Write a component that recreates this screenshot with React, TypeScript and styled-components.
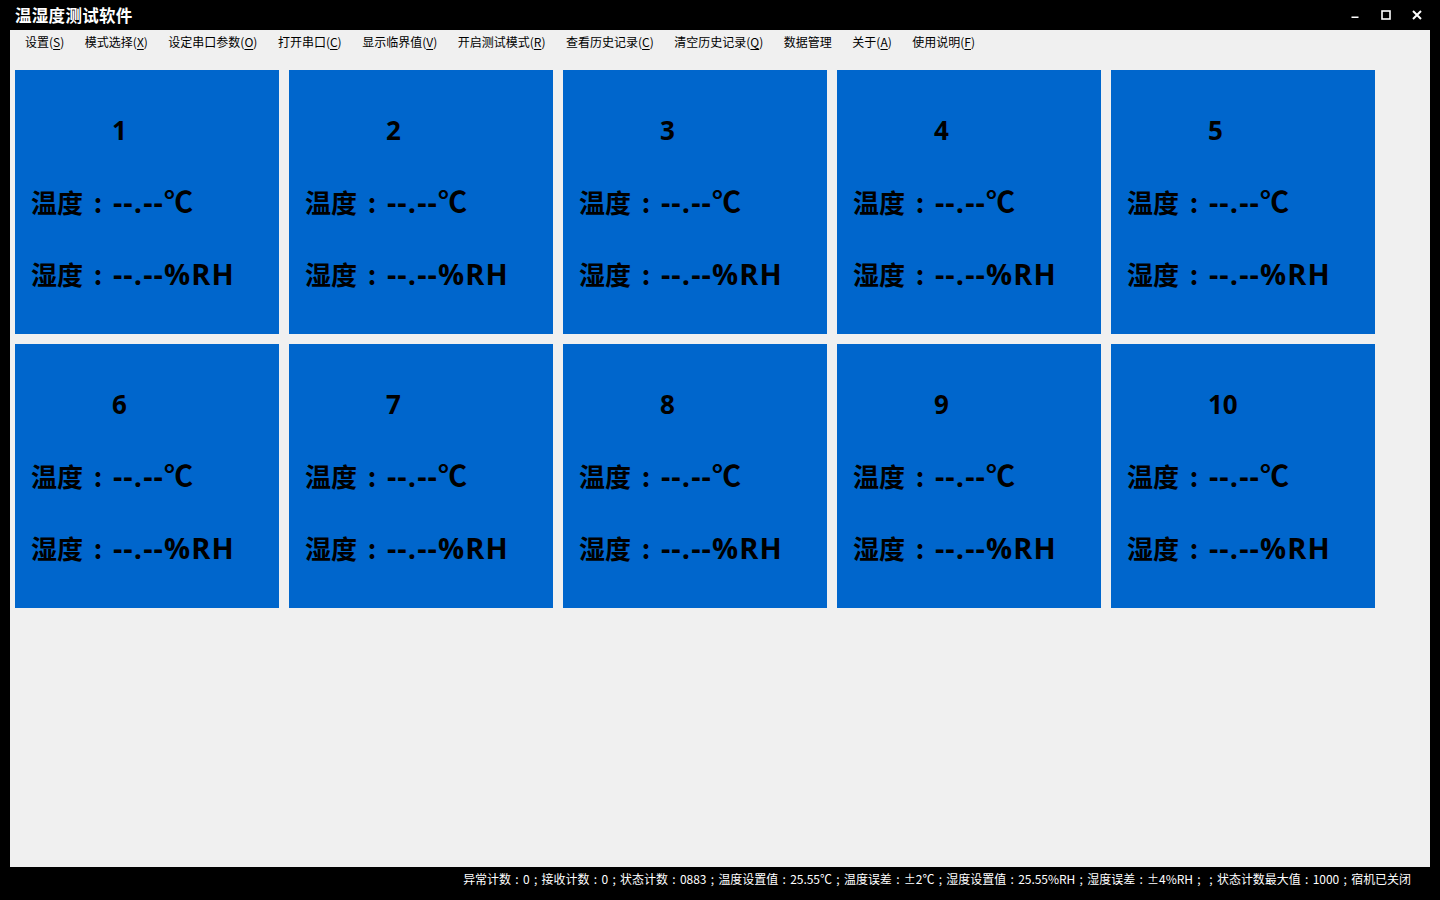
import React from "react";
import styled, { createGlobalStyle } from "styled-components";

const GlobalStyle = createGlobalStyle`
  html, body { margin: 0; padding: 0; background: #000; }
  body { font-family: "Noto Sans CJK SC", "Noto Sans", sans-serif; }
  * { box-sizing: border-box; }
`;

const Window = styled.div`
  width: 1440px;
  height: 900px;
  background: #000;
  display: flex;
  flex-direction: column;
  overflow: hidden;
`;

const TitleBar = styled.div`
  height: 30px;
  display: flex;
  align-items: center;
  padding-left: 15px;
  color: #fff;
`;

const Title = styled.div`
  font-size: 16.5px;
  font-weight: 700;
  line-height: 1;
  flex: 1;
  letter-spacing: 0.3px;
`;

const Controls = styled.div`
  display: flex;
  align-items: center;
  height: 30px;
  margin-right: 8px;
`;

const CtrlButton = styled.div`
  width: 31px;
  height: 30px;
  display: flex;
  align-items: center;
  justify-content: center;
`;

const Main = styled.div`
  flex: 1;
  margin: 0 10px;
  background: #f0f0f0;
  display: flex;
  flex-direction: column;
`;

const MenuBar = styled.div`
  height: 24px;
  display: flex;
  align-items: center;
  gap: 20.5px;
  padding-left: 15px;
  font-size: 12px;
  color: #000;
`;

const MenuItem = styled.span`
  white-space: nowrap;
  line-height: 1;
`;

const Key = styled.span`
  text-decoration: underline;
  text-underline-offset: 2px;
`;

const Grid = styled.div`
  display: grid;
  grid-template-columns: repeat(5, 264px);
  grid-auto-rows: 264px;
  gap: 10px;
  padding: 16px 0 0 5px;
`;

const Card = styled.div`
  background: #0066cc;
  display: flex;
  flex-direction: column;
  padding: 0 0 0 16px;
  color: #000;
  font-weight: 700;
`;

const CardNumber = styled.div`
  font-family: "Open Sans", "Noto Sans CJK SC", sans-serif;
  font-size: 26px;
  line-height: 1;
  height: 26px;
  margin-top: 47px;
  padding-left: 81px;
`;

const Reading = styled.div`
  display: flex;
  align-items: baseline;
  font-size: 26px;
  line-height: 1;
  height: 26px;
  margin-top: 44px;
  white-space: nowrap;

  & + & {
    margin-top: 46px;
  }
`;

const Value = styled.span`
  font-family: "Open Sans", "Noto Sans CJK SC", sans-serif;
  font-weight: 700;
  font-size: 29px;
  letter-spacing: 1.1px;
`;

const Punct = styled.span<{ $w?: string }>`
  display: inline-block;
  width: ${(p) => p.$w ?? "1em"};
  text-align: center;
`;

const StatusBar = styled.div`
  height: 33px;
  display: flex;
  justify-content: flex-end;
  padding: 4px 29px 0 0;
  color: #fff;
  font-size: 12px;
  line-height: 16px;
  white-space: nowrap;
`;

const StatusText = styled.span`
  letter-spacing: -0.04px;
`;

const menus: [string, string | null][] = [
  ["设置", "S"],
  ["模式选择", "X"],
  ["设定串口参数", "O"],
  ["打开串口", "C"],
  ["显示临界值", "V"],
  ["开启测试模式", "R"],
  ["查看历史记录", "C"],
  ["清空历史记录", "Q"],
  ["数据管理", null],
  ["关于", "A"],
  ["使用说明", "F"],
];

const status =
  "异常计数：0；接收计数：0；状态计数：0883；温度设置值：25.55℃；温度误差：±2℃；湿度设置值：25.55%RH；湿度误差：±4%RH；；状态计数最大值：1000；宿机已关闭";

function renderPunct(text: string) {
  const parts = text.split(/([：；])/);
  return parts.map((p, i) =>
    p === "：" ? (
      <Punct key={i}>:</Punct>
    ) : p === "；" ? (
      <Punct key={i}>;</Punct>
    ) : (
      <React.Fragment key={i}>{p}</React.Fragment>
    )
  );
}

export default function App() {
  return (
    <>
      <GlobalStyle />
      <Window>
        <TitleBar>
          <Title>温湿度测试软件</Title>
          <Controls>
            <CtrlButton>
              <svg width="10" height="10" viewBox="0 0 10 10">
                <rect x="1.5" y="6.5" width="7" height="1.5" fill="#fff" />
              </svg>
            </CtrlButton>
            <CtrlButton>
              <svg width="10" height="10" viewBox="0 0 10 10">
                <rect x="1" y="1" width="8" height="8" fill="none" stroke="#fff" strokeWidth="1.6" />
              </svg>
            </CtrlButton>
            <CtrlButton>
              <svg width="10" height="10" viewBox="0 0 10 10">
                <path d="M1 1 L9 9 M9 1 L1 9" stroke="#fff" strokeWidth="2" />
              </svg>
            </CtrlButton>
          </Controls>
        </TitleBar>
        <Main>
          <MenuBar>
            {menus.map(([label, key], i) => (
              <MenuItem key={i}>
                {label}
                {key && (
                  <>
                    (<Key>{key}</Key>)
                  </>
                )}
              </MenuItem>
            ))}
          </MenuBar>
          <Grid>
            {Array.from({ length: 10 }, (_, i) => (
              <Card key={i}>
                <CardNumber>{i + 1}</CardNumber>
                <Reading>
                  温度<Punct $w="1.15em">:</Punct>
                  <Value>--.--℃</Value>
                </Reading>
                <Reading>
                  湿度<Punct $w="1.15em">:</Punct>
                  <Value>--.--%RH</Value>
                </Reading>
              </Card>
            ))}
          </Grid>
        </Main>
        <StatusBar>
          <StatusText>{renderPunct(status)}</StatusText>
        </StatusBar>
      </Window>
    </>
  );
}
